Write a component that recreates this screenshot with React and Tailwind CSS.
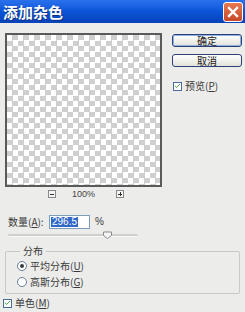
import { Check } from 'lucide-react'

const cjk = { fontFamily: '"Noto Sans CJK SC", "Noto Sans", sans-serif' }

function XpButton({ children, focused }) {
  return (
    <div className="w-[70px] h-[13px] rounded-[3px] border border-[#2d3f73] bg-gradient-to-b from-[#ffffff] to-[#e3e3dc] flex items-center justify-center">
      <div
        className={`w-full h-full rounded-[2px] flex items-center justify-center text-[10px] leading-none text-[#222] ${
          focused ? 'border border-[#8fb1ea]' : ''
        }`}
      >
        {children}
      </div>
    </div>
  )
}

function CheckBox() {
  return (
    <div className="w-[9px] h-[9px] border border-[#4a6b9a] bg-white flex items-center justify-center">
      <Check size={8} strokeWidth={3} className="text-[#2a8a2a]" />
    </div>
  )
}

function Radio({ on }) {
  return (
    <div className="w-[10px] h-[10px] rounded-full border border-[#6a7d99] bg-white flex items-center justify-center">
      {on && <div className="w-[4px] h-[4px] rounded-full bg-[#3b3b3b]" />}
    </div>
  )
}

export default function App() {
  return (
    <div className="w-[245px] h-[312px] overflow-hidden bg-[#ececea] text-[#3a3a3a]" style={cjk}>
      <div className="h-[23px] bg-gradient-to-b from-[#2a72ec] via-[#0a54d8] to-[#0843b9] flex items-center justify-between pl-[3px] pr-[2px]">
        <span className="text-white font-bold text-[15px] leading-none [text-shadow:1px_1px_0_#0b2e7a]">添加杂色</span>
        <div className="w-[20px] h-[20px] rounded-[3px] border border-white bg-gradient-to-b from-[#e8784e] to-[#c8482a] flex items-center justify-center">
          <svg width="12" height="12" viewBox="0 0 12 12">
            <path d="M2 2 L10 10 M10 2 L2 10" stroke="white" strokeWidth="2.4" strokeLinecap="square" />
          </svg>
        </div>
      </div>

      <div className="flex">
        <div className="w-[167px] pl-[5px] pt-[10px]">
          <div className="w-[157px] h-[154px] border-2 border-[#5a5a5a] bg-[image:repeating-conic-gradient(#cfcfcf_0%_25%,#ffffff_0%_50%)] bg-[length:11px_11px]" />
          <div className="h-[12px] mt-[1px] flex items-center pl-[43px] text-[9px] leading-none text-[#444]">
            <div className="w-[8px] h-[8px] border border-[#888] bg-[#f4f4f4] flex items-center justify-center">
              <div className="w-[4px] h-[1px] bg-[#333]" />
            </div>
            <span className="ml-[16px]" style={{ fontFamily: '"Liberation Sans", sans-serif' }}>100%</span>
            <div className="ml-[21px] w-[8px] h-[8px] border border-[#888] bg-[#f4f4f4] flex items-center justify-center relative">
              <div className="w-[4px] h-[1px] bg-[#333]" />
              <div className="absolute w-[1px] h-[4px] bg-[#333]" />
            </div>
          </div>
          <div className="mt-[15px] flex items-center h-[14px] pl-[3px] text-[10px] leading-none">
            <span className="w-[41px]">
              数量(<span className="underline">A</span>):
            </span>
            <div className="w-[41px] h-[14px] border border-[#7f9db9] bg-white flex items-center pl-[1px]">
              <span className="bg-[#3169c6] text-white px-[1px] text-[10px]" style={{ fontFamily: '"Liberation Sans", sans-serif' }}>296.5</span>
            </div>
            <span className="ml-[5px] text-[10px]" style={{ fontFamily: '"Liberation Sans", sans-serif' }}>%</span>
          </div>
          <div className="mt-[2px] h-[8px] ml-[3px] w-[130px] flex items-center relative">
            <div className="w-full h-[3px] rounded-full bg-[#cfcfcf] border-b border-[#f8f8f8]" />
            <svg className="absolute left-[94px] top-0" width="11" height="8" viewBox="0 0 11 8">
              <path d="M1.5 1 H9.5 V4.5 L5.5 7.5 L1.5 4.5 Z" fill="#f4f4f4" stroke="#8a8a8a" strokeWidth="1" />
            </svg>
          </div>
        </div>

        <div className="pt-[11px] pl-[5px] flex flex-col">
          <XpButton focused>确定</XpButton>
          <div className="mt-[7px]">
            <XpButton>取消</XpButton>
          </div>
          <div className="mt-[14px] flex items-center gap-[3px] pl-[1px] text-[10px] leading-none">
            <CheckBox />
            <span>预览(<span className="underline">P</span>)</span>
          </div>
        </div>
      </div>

      <div className="mt-[12px] mx-[5px] h-[43px] border border-[#c9c9c4] rounded-[2px] relative pt-[8px] pl-[11px] text-[10px] leading-none">
        <span className="absolute -top-[6px] left-[14px] bg-[#ececea] px-[3px]">分布</span>
        <div className="flex items-center gap-[3px] h-[12px]">
          <Radio on />
          <span>平均分布(<span className="underline">U</span>)</span>
        </div>
        <div className="mt-[4px] flex items-center gap-[3px] h-[12px]">
          <Radio />
          <span>高斯分布(<span className="underline">G</span>)</span>
        </div>
      </div>

      <div className="mt-[4px] pl-[3px] flex items-center gap-[3px] text-[10px] leading-none">
        <CheckBox />
        <span>单色(<span className="underline">M</span>)</span>
      </div>
    </div>
  )
}
